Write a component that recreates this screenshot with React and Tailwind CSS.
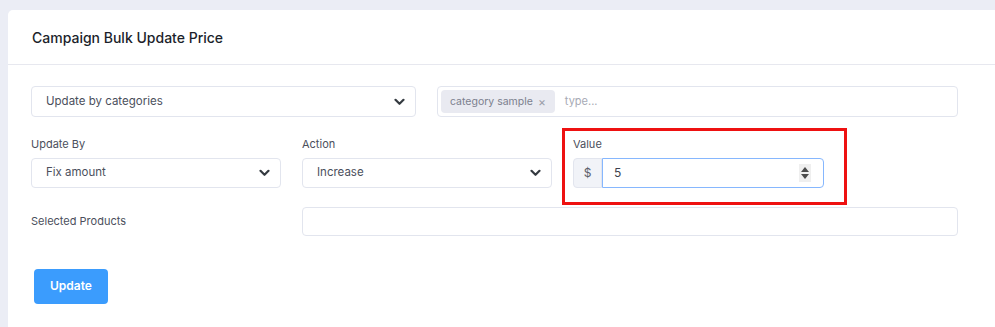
import React from "react";

const Chevron = () => (
  <svg width="11" height="8" viewBox="0 0 11 8" className="shrink-0">
    <path d="M1.5 1.8 L5.5 5.8 L9.5 1.8" fill="none" stroke="#343a40" strokeWidth="2.2" strokeLinecap="round" strokeLinejoin="round" />
  </svg>
);

const Select = ({ text, className = "" }) => (
  <div className={`flex items-center justify-between rounded-[4px] border border-[#e2e5ee] bg-white pl-[14px] pr-[10px] text-[11.5px] text-[#4b4f5c] ${className}`}>
    <span>{text}</span>
    <Chevron />
  </div>
);

export default function App() {
  return (
    <div className="min-h-[327px] w-[995px] overflow-hidden bg-[#ebedf5] pl-[8px] pt-[10px]" style={{ fontFamily: "Inter, 'Noto Sans', sans-serif" }}>
      <div className="h-[330px] rounded-tl-[5px] bg-white">
        <div className="flex h-[55px] items-center border-b border-[#e7e8ef] pl-[24px] text-[14px] font-medium text-[#1c1f2b]">
          Campaign Bulk Update Price
        </div>
        <div className="pl-[23px] pt-[21px]">
          <div className="flex gap-[21px]">
            <Select text="Update by categories" className="h-[31px] w-[385px]" />
            <div className="flex h-[31px] w-[521px] items-center rounded-[4px] border border-[#e2e5ee] pl-[3px]">
              <div className="flex h-[23px] items-center gap-[5px] rounded-[4px] bg-[#e9eaf1] px-[9px] text-[10.5px] text-[#7b7f8e]">
                <span>category sample</span>
                <span className="text-[12px] text-[#9b9ea9]">×</span>
              </div>
              <span className="ml-[10px] text-[11px] text-[#a7aab5]">type...</span>
            </div>
          </div>
          <div className="mt-[11px] flex gap-[21px]">
            <div className="w-[250px] pt-[8px]">
              <div className="text-[11px] text-[#4b4f5c]">Update By</div>
              <Select text="Fix amount" className="mt-[5px] h-[30px]" />
            </div>
            <div className="w-[250px] pt-[8px]">
              <div className="text-[11px] text-[#4b4f5c]">Action</div>
              <Select text="Increase" className="mt-[5px] h-[30px]" />
            </div>
            <div className="ml-[-11px] border-[3px] border-[#ee1111] pb-[14px] pl-[8px] pr-[20px] pt-[5px]">
              <div className="text-[11px] text-[#4b4f5c]">Value</div>
              <div className="mt-[5px] flex h-[30px] w-[251px]">
                <div className="flex w-[29px] items-center justify-center rounded-l-[4px] border border-[#e2e5ee] bg-[#f1f3f8] text-[12px] text-[#5b5f6b]">$</div>
                <div className="flex flex-1 items-center justify-between rounded-r-[4px] border border-[#86b7fe] pl-[11px] pr-[12px] text-[12px] text-[#3d414d]">
                  <span>5</span>
                  <div className="flex h-[18px] w-[12px] flex-col items-center justify-center gap-[2px] bg-[#efefef]">
                    <svg width="8" height="5" viewBox="0 0 8 5"><path d="M0 5 L4 0 L8 5 Z" fill="#4a4a4a" /></svg>
                    <svg width="8" height="5" viewBox="0 0 8 5"><path d="M0 0 L4 5 L8 0 Z" fill="#4a4a4a" /></svg>
                  </div>
                </div>
              </div>
            </div>
          </div>
          <div className="mt-[2px] flex items-center gap-[21px]">
            <div className="w-[250px] text-[11px] text-[#4b4f5c]">Selected Products</div>
            <div className="h-[29px] w-[656px] rounded-[4px] border border-[#e2e5ee]"></div>
          </div>
          <button className="ml-[3px] mt-[33px] flex h-[35px] w-[74px] items-center justify-center rounded-[4px] bg-[#3b9cfd] text-[12px] font-semibold text-white">
            Update
          </button>
        </div>
      </div>
    </div>
  );
}
